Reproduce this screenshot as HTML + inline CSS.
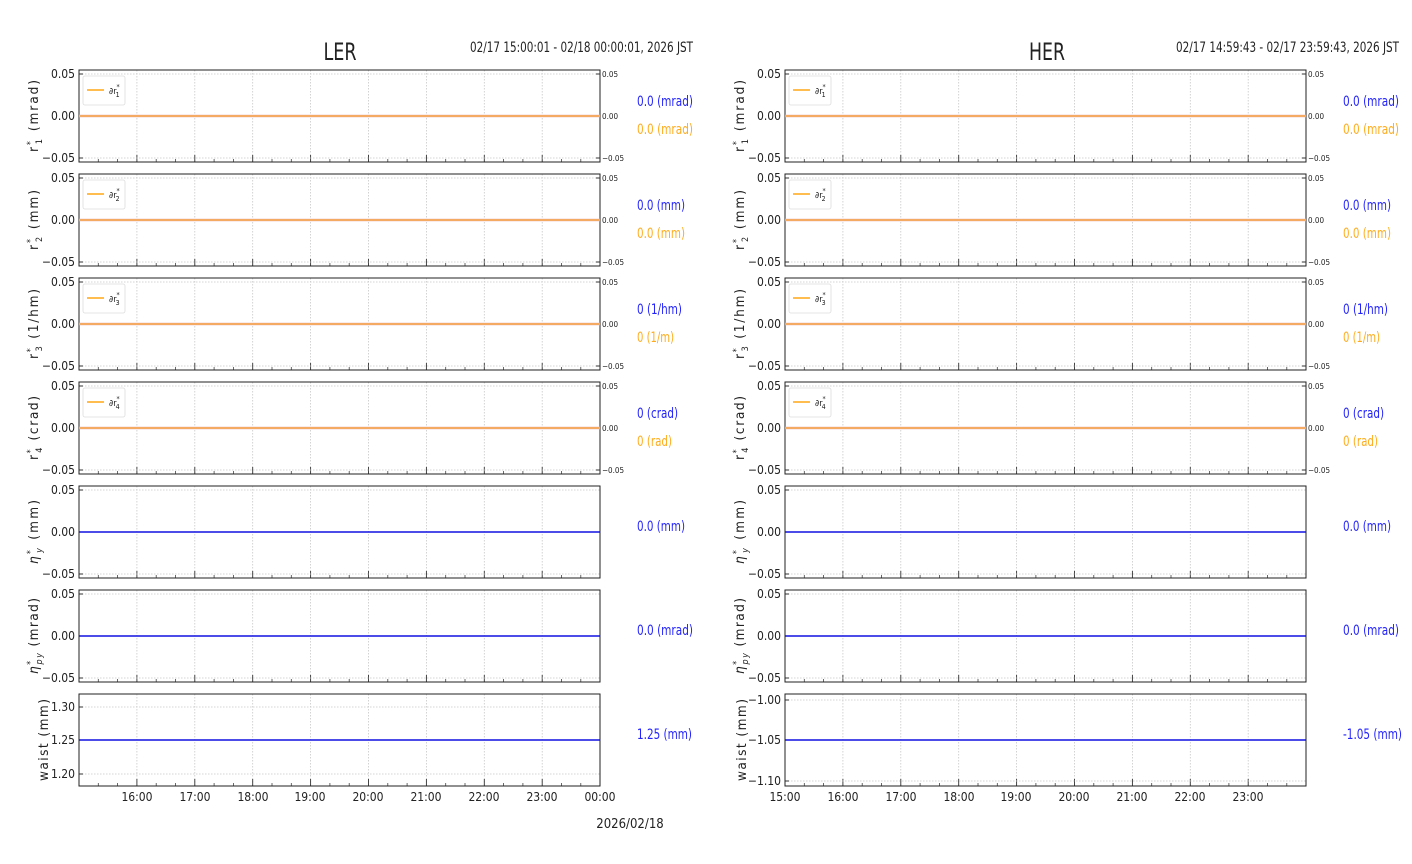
<!DOCTYPE html>
<html><head><meta charset="utf-8"><style>
html,body{margin:0;padding:0;background:#fff;width:1412px;height:864px;overflow:hidden}
svg{display:block}
text{font-family:"Liberation Sans Narrow","DejaVu Sans Condensed","Liberation Sans",sans-serif;fill:#222}
.t{font-size:12px}
.s{font-size:8px}
.yl{font-family:"DejaVu Sans","Liberation Sans",sans-serif;font-size:13.5px}
.vb{font-size:14px;fill:#2323ff}
.vo{font-size:14px;fill:#ffad1f}
</style></head><body>
<svg width="1412" height="864" viewBox="0 0 1412 864" xmlns="http://www.w3.org/2000/svg">
<defs>
<g id="vg">
<path d="M57.9 0V92M115.8 0V92M173.7 0V92M231.6 0V92M289.5 0V92M347.4 0V92M405.3 0V92M463.2 0V92" stroke="#c8c8c8" stroke-width="0.8" stroke-dasharray="1.5,1.5"/>
<path d="M19.3 92v-3M38.6 92v-3M77.2 92v-3M96.5 92v-3M135.1 92v-3M154.4 92v-3M193 92v-3M212.3 92v-3M250.9 92v-3M270.2 92v-3M308.8 92v-3M328.1 92v-3M366.7 92v-3M386 92v-3M424.6 92v-3M443.9 92v-3M482.5 92v-3M501.8 92v-3" stroke="#444" stroke-width="0.8"/>
<path d="M57.9 92v-7M115.8 92v-7M173.7 92v-7M231.6 92v-7M289.5 92v-7M347.4 92v-7M405.3 92v-7M463.2 92v-7" stroke="#333" stroke-width="0.9"/>
</g>
<g id="std">
<use href="#vg"/>
<path d="M0 4H521M0 88H521" stroke="#c8c8c8" stroke-width="0.8" stroke-dasharray="1.5,1.5"/>
<path d="M0 4h4M0 46h4M0 88h4" stroke="#333"/>
<rect x="0" y="0" width="521" height="92" fill="none" stroke="#222" stroke-width="1"/>
</g>
<g id="rt">
<path d="M521 4h-4M521 46h-4M521 88h-4" stroke="#333"/>
</g>
<g id="orl">
<line x1="0" y1="46" x2="521" y2="46" stroke="#e8b0b0" stroke-width="2.4"/>
<line x1="0" y1="46" x2="521" y2="46" stroke="#ffa515" stroke-width="0.9"/>
<rect x="4" y="6" width="42" height="29" rx="2" fill="#fff" stroke="#ddd" stroke-width="0.8"/>
<line x1="8" y1="20" x2="25" y2="20" stroke="#ffa515" stroke-width="1.6"/>
</g>
<g id="bll">
<line x1="0" y1="46" x2="521" y2="46" stroke="#1010e0" stroke-width="1.6"/>
</g>
</defs>

<text x="340" y="60" text-anchor="middle" style="font-size:24px" fill="#111" textLength="33" lengthAdjust="spacingAndGlyphs">LER</text>
<text x="470" y="52" class="t" style="font-size:14px" textLength="223" lengthAdjust="spacingAndGlyphs">02/17 15:00:01 - 02/18 00:00:01, 2026 JST</text>
<text x="1047" y="60" text-anchor="middle" style="font-size:24px" fill="#111" textLength="36" lengthAdjust="spacingAndGlyphs">HER</text>
<text x="1176" y="52" class="t" style="font-size:14px" textLength="223" lengthAdjust="spacingAndGlyphs">02/17 14:59:43 - 02/17 23:59:43, 2026 JST</text>

<g transform="translate(79,70)"><use href="#std"/><use href="#rt"/><use href="#orl"/><text x="30" y="24" class="s" style="font-size:9px">∂r<tspan dy="-5" style="font-size:7px">*</tspan><tspan dx="-4" dy="8" style="font-size:7px">1</tspan></text></g>
<g transform="translate(79,174)"><use href="#std"/><use href="#rt"/><use href="#orl"/><text x="30" y="24" class="s" style="font-size:9px">∂r<tspan dy="-5" style="font-size:7px">*</tspan><tspan dx="-4" dy="8" style="font-size:7px">2</tspan></text></g>
<g transform="translate(79,278)"><use href="#std"/><use href="#rt"/><use href="#orl"/><text x="30" y="24" class="s" style="font-size:9px">∂r<tspan dy="-5" style="font-size:7px">*</tspan><tspan dx="-4" dy="8" style="font-size:7px">3</tspan></text></g>
<g transform="translate(79,382)"><use href="#std"/><use href="#rt"/><use href="#orl"/><text x="30" y="24" class="s" style="font-size:9px">∂r<tspan dy="-5" style="font-size:7px">*</tspan><tspan dx="-4" dy="8" style="font-size:7px">4</tspan></text></g>
<g transform="translate(79,486)"><use href="#std"/><use href="#bll"/></g>
<g transform="translate(79,590)"><use href="#std"/><use href="#bll"/></g>
<g transform="translate(79,694)"><use href="#vg"/>
<path d="M0 13H521M0 80H521" stroke="#c8c8c8" stroke-width="0.8" stroke-dasharray="1.5,1.5"/>
<path d="M0 13h4M0 46h4M0 80h4" stroke="#333"/><use href="#bll"/>
<rect x="0" y="0" width="521" height="92" fill="none" stroke="#222"/></g>

<g transform="translate(785,70)"><use href="#std"/><use href="#rt"/><use href="#orl"/><text x="30" y="24" class="s" style="font-size:9px">∂r<tspan dy="-5" style="font-size:7px">*</tspan><tspan dx="-4" dy="8" style="font-size:7px">1</tspan></text></g>
<g transform="translate(785,174)"><use href="#std"/><use href="#rt"/><use href="#orl"/><text x="30" y="24" class="s" style="font-size:9px">∂r<tspan dy="-5" style="font-size:7px">*</tspan><tspan dx="-4" dy="8" style="font-size:7px">2</tspan></text></g>
<g transform="translate(785,278)"><use href="#std"/><use href="#rt"/><use href="#orl"/><text x="30" y="24" class="s" style="font-size:9px">∂r<tspan dy="-5" style="font-size:7px">*</tspan><tspan dx="-4" dy="8" style="font-size:7px">3</tspan></text></g>
<g transform="translate(785,382)"><use href="#std"/><use href="#rt"/><use href="#orl"/><text x="30" y="24" class="s" style="font-size:9px">∂r<tspan dy="-5" style="font-size:7px">*</tspan><tspan dx="-4" dy="8" style="font-size:7px">4</tspan></text></g>
<g transform="translate(785,486)"><use href="#std"/><use href="#bll"/></g>
<g transform="translate(785,590)"><use href="#std"/><use href="#bll"/></g>
<g transform="translate(785,694)"><use href="#vg"/>
<path d="M0 6H521M0 87H521" stroke="#c8c8c8" stroke-width="0.8" stroke-dasharray="1.5,1.5"/>
<path d="M0 6h4M0 46h4M0 87h4" stroke="#333"/><use href="#bll"/>
<rect x="0" y="0" width="521" height="92" fill="none" stroke="#222"/></g>

<g class="t" text-anchor="end">
<text x="75" y="78">0.05</text><text x="75" y="120">0.00</text><text x="75" y="162">−0.05</text>
<text x="75" y="182">0.05</text><text x="75" y="224">0.00</text><text x="75" y="266">−0.05</text>
<text x="75" y="286">0.05</text><text x="75" y="328">0.00</text><text x="75" y="370">−0.05</text>
<text x="75" y="390">0.05</text><text x="75" y="432">0.00</text><text x="75" y="474">−0.05</text>
<text x="75" y="494">0.05</text><text x="75" y="536">0.00</text><text x="75" y="578">−0.05</text>
<text x="75" y="598">0.05</text><text x="75" y="640">0.00</text><text x="75" y="682">−0.05</text>
<text x="75" y="711">1.30</text><text x="75" y="744">1.25</text><text x="75" y="778">1.20</text>
</g>
<g class="t" text-anchor="end">
<text x="781" y="78">0.05</text><text x="781" y="120">0.00</text><text x="781" y="162">−0.05</text>
<text x="781" y="182">0.05</text><text x="781" y="224">0.00</text><text x="781" y="266">−0.05</text>
<text x="781" y="286">0.05</text><text x="781" y="328">0.00</text><text x="781" y="370">−0.05</text>
<text x="781" y="390">0.05</text><text x="781" y="432">0.00</text><text x="781" y="474">−0.05</text>
<text x="781" y="494">0.05</text><text x="781" y="536">0.00</text><text x="781" y="578">−0.05</text>
<text x="781" y="598">0.05</text><text x="781" y="640">0.00</text><text x="781" y="682">−0.05</text>
<text x="781" y="704">−1.00</text><text x="781" y="744">−1.05</text><text x="781" y="785">−1.10</text>
</g>
<g class="s">
<text x="602" y="77">0.05</text><text x="602" y="119">0.00</text><text x="602" y="161">−0.05</text>
<text x="602" y="181">0.05</text><text x="602" y="223">0.00</text><text x="602" y="265">−0.05</text>
<text x="602" y="285">0.05</text><text x="602" y="327">0.00</text><text x="602" y="369">−0.05</text>
<text x="602" y="389">0.05</text><text x="602" y="431">0.00</text><text x="602" y="473">−0.05</text>
<text x="1308" y="77">0.05</text><text x="1308" y="119">0.00</text><text x="1308" y="161">−0.05</text>
<text x="1308" y="181">0.05</text><text x="1308" y="223">0.00</text><text x="1308" y="265">−0.05</text>
<text x="1308" y="285">0.05</text><text x="1308" y="327">0.00</text><text x="1308" y="369">−0.05</text>
<text x="1308" y="389">0.05</text><text x="1308" y="431">0.00</text><text x="1308" y="473">−0.05</text>
</g>

<g class="yl">
<text transform="translate(38,116) rotate(-90)" text-anchor="middle" textLength="72">r<tspan dy="-5" font-size="9">*</tspan><tspan dx="-5" dy="9" font-size="9">1</tspan><tspan dy="-4">  (mrad)</tspan></text>
<text transform="translate(38,220) rotate(-90)" text-anchor="middle" textLength="60">r<tspan dy="-5" font-size="9">*</tspan><tspan dx="-5" dy="9" font-size="9">2</tspan><tspan dy="-4">  (mm)</tspan></text>
<text transform="translate(38,324) rotate(-90)" text-anchor="middle" textLength="70">r<tspan dy="-5" font-size="9">*</tspan><tspan dx="-5" dy="9" font-size="9">3</tspan><tspan dy="-4">  (1/hm)</tspan></text>
<text transform="translate(38,428) rotate(-90)" text-anchor="middle" textLength="64">r<tspan dy="-5" font-size="9">*</tspan><tspan dx="-5" dy="9" font-size="9">4</tspan><tspan dy="-4">  (crad)</tspan></text>
<text transform="translate(38,532) rotate(-90)" text-anchor="middle" textLength="64"><tspan font-style="italic">η</tspan><tspan dy="-5" font-size="9">*</tspan><tspan dx="-5" dy="9" font-size="9" font-style="italic">y</tspan><tspan dy="-4">  (mm)</tspan></text>
<text transform="translate(38,636) rotate(-90)" text-anchor="middle" textLength="76"><tspan font-style="italic">η</tspan><tspan dy="-5" font-size="9">*</tspan><tspan dx="-5" dy="9" font-size="9" font-style="italic">py</tspan><tspan dy="-4">  (mrad)</tspan></text>
<text transform="translate(48,740) rotate(-90)" text-anchor="middle" textLength="82">waist  (mm)</text>
<text transform="translate(744,116) rotate(-90)" text-anchor="middle" textLength="72">r<tspan dy="-5" font-size="9">*</tspan><tspan dx="-5" dy="9" font-size="9">1</tspan><tspan dy="-4">  (mrad)</tspan></text>
<text transform="translate(744,220) rotate(-90)" text-anchor="middle" textLength="60">r<tspan dy="-5" font-size="9">*</tspan><tspan dx="-5" dy="9" font-size="9">2</tspan><tspan dy="-4">  (mm)</tspan></text>
<text transform="translate(744,324) rotate(-90)" text-anchor="middle" textLength="70">r<tspan dy="-5" font-size="9">*</tspan><tspan dx="-5" dy="9" font-size="9">3</tspan><tspan dy="-4">  (1/hm)</tspan></text>
<text transform="translate(744,428) rotate(-90)" text-anchor="middle" textLength="64">r<tspan dy="-5" font-size="9">*</tspan><tspan dx="-5" dy="9" font-size="9">4</tspan><tspan dy="-4">  (crad)</tspan></text>
<text transform="translate(744,532) rotate(-90)" text-anchor="middle" textLength="64"><tspan font-style="italic">η</tspan><tspan dy="-5" font-size="9">*</tspan><tspan dx="-5" dy="9" font-size="9" font-style="italic">y</tspan><tspan dy="-4">  (mm)</tspan></text>
<text transform="translate(744,636) rotate(-90)" text-anchor="middle" textLength="76"><tspan font-style="italic">η</tspan><tspan dy="-5" font-size="9">*</tspan><tspan dx="-5" dy="9" font-size="9" font-style="italic">py</tspan><tspan dy="-4">  (mrad)</tspan></text>
<text transform="translate(746,740) rotate(-90)" text-anchor="middle" textLength="82">waist  (mm)</text>
</g>

<g lengthAdjust="spacingAndGlyphs">
<text x="637" y="106" class="vb" textLength="56" lengthAdjust="spacingAndGlyphs">0.0 (mrad)</text><text x="637" y="134" class="vo" textLength="56" lengthAdjust="spacingAndGlyphs">0.0 (mrad)</text>
<text x="637" y="210" class="vb" textLength="48" lengthAdjust="spacingAndGlyphs">0.0 (mm)</text><text x="637" y="238" class="vo" textLength="48" lengthAdjust="spacingAndGlyphs">0.0 (mm)</text>
<text x="637" y="314" class="vb" textLength="45" lengthAdjust="spacingAndGlyphs">0 (1/hm)</text><text x="637" y="342" class="vo" textLength="37" lengthAdjust="spacingAndGlyphs">0 (1/m)</text>
<text x="637" y="418" class="vb" textLength="41" lengthAdjust="spacingAndGlyphs">0 (crad)</text><text x="637" y="446" class="vo" textLength="35" lengthAdjust="spacingAndGlyphs">0 (rad)</text>
<text x="637" y="531" class="vb" textLength="48" lengthAdjust="spacingAndGlyphs">0.0 (mm)</text>
<text x="637" y="635" class="vb" textLength="56" lengthAdjust="spacingAndGlyphs">0.0 (mrad)</text>
<text x="637" y="739" class="vb" textLength="55" lengthAdjust="spacingAndGlyphs">1.25 (mm)</text>
<text x="1343" y="106" class="vb" textLength="56" lengthAdjust="spacingAndGlyphs">0.0 (mrad)</text><text x="1343" y="134" class="vo" textLength="56" lengthAdjust="spacingAndGlyphs">0.0 (mrad)</text>
<text x="1343" y="210" class="vb" textLength="48" lengthAdjust="spacingAndGlyphs">0.0 (mm)</text><text x="1343" y="238" class="vo" textLength="48" lengthAdjust="spacingAndGlyphs">0.0 (mm)</text>
<text x="1343" y="314" class="vb" textLength="45" lengthAdjust="spacingAndGlyphs">0 (1/hm)</text><text x="1343" y="342" class="vo" textLength="37" lengthAdjust="spacingAndGlyphs">0 (1/m)</text>
<text x="1343" y="418" class="vb" textLength="41" lengthAdjust="spacingAndGlyphs">0 (crad)</text><text x="1343" y="446" class="vo" textLength="35" lengthAdjust="spacingAndGlyphs">0 (rad)</text>
<text x="1343" y="531" class="vb" textLength="48" lengthAdjust="spacingAndGlyphs">0.0 (mm)</text>
<text x="1343" y="635" class="vb" textLength="56" lengthAdjust="spacingAndGlyphs">0.0 (mrad)</text>
<text x="1343" y="739" class="vb" textLength="59" lengthAdjust="spacingAndGlyphs">-1.05 (mm)</text>
</g>

<g class="t" text-anchor="middle">
<text x="137" y="801">16:00</text><text x="195" y="801">17:00</text><text x="253" y="801">18:00</text><text x="310" y="801">19:00</text><text x="368" y="801">20:00</text><text x="426" y="801">21:00</text><text x="484" y="801">22:00</text><text x="542" y="801">23:00</text><text x="600" y="801">00:00</text>
<text x="785" y="801">15:00</text><text x="843" y="801">16:00</text><text x="901" y="801">17:00</text><text x="959" y="801">18:00</text><text x="1016" y="801">19:00</text><text x="1074" y="801">20:00</text><text x="1132" y="801">21:00</text><text x="1190" y="801">22:00</text><text x="1248" y="801">23:00</text>
<text x="630" y="828" style="font-size:13px">2026/02/18</text>
</g>
</svg>
</body></html>
